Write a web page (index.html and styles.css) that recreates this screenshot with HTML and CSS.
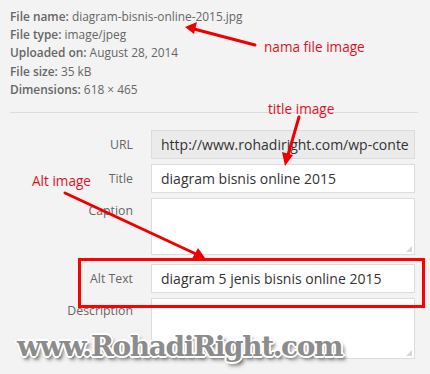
FILE: index.html
```html
<!DOCTYPE html>
<html>
<head>
<meta charset="utf-8">
<link rel="stylesheet" href="styles.css">
</head>
<body>
<div class="page">
  <div class="info">
    <div><b>File name:</b> diagram-bisnis-online-2015.jpg</div>
    <div><b>File type:</b> image/jpeg</div>
    <div><b>Uploaded on:</b> August 28, 2014</div>
    <div><b>File size:</b> 35 kB</div>
    <div><b>Dimensions:</b> 618 × 465</div>
  </div>
  <div class="sep"></div>
  <div class="form">
    <label class="lbl">URL</label>
    <div class="field ro">http://www.rohadiright.com/wp-conte</div>
    <label class="lbl">Title</label>
    <div class="field">diagram bisnis online 2015</div>
    <label class="lbl top">Caption</label>
    <div class="field area cap"><span class="grip"></span></div>
    <label class="lbl alt">Alt Text</label>
    <div class="field alt">diagram 5 jenis bisnis online 2015</div>
    <label class="lbl top">Description</label>
    <div class="field area desc"><span class="grip"></span></div>
  </div>

  <div class="note n1">nama file image</div>
  <div class="note n2">title image</div>
  <div class="note n3">Alt image</div>
  <div class="redbox"></div>
  <svg class="arrows" width="430" height="374" viewBox="0 0 430 374">
    <g stroke="#ee0000" stroke-width="3" stroke-linecap="round" fill="none">
      <line x1="255" y1="45" x2="194" y2="29"/>
      <line x1="299" y1="117" x2="288" y2="155"/>
      <line x1="65" y1="193" x2="196" y2="254"/>
    </g>
    <g fill="#ee0000">
      <polygon points="185,27 197,22 194,34"/>
      <polygon points="285,166 282,152 293,155"/>
      <polygon points="205,258 192,259 198,248"/>
    </g>
  </svg>
  <div class="wm">www.RohadiRight.com</div>
</div>
</body>
</html>
```
FILE: styles.css
```css
html, body { margin: 0; padding: 0; }
body { background: #f3f3f3; font-family: "Open Sans", "DejaVu Sans", sans-serif; }
.page { position: relative; width: 430px; height: 374px; overflow: hidden; }
.info { padding: 7px 0 0 10px; font-size: 11.9px; line-height: 18.2px; color: #666; }
.info b { font-weight: 600; }
.sep { margin: 14px 12px 0 10px; border-top: 1px solid #dcdcdc; }
.form {
  display: grid;
  grid-template-columns: 133px 264px;
  column-gap: 18px;
  margin-top: 17px;
}
.lbl { font-size: 12.3px; color: #666; text-align: right; line-height: 29px; }
.lbl.top { line-height: 18px; padding-top: 4px; }
.field {
  box-sizing: border-box;
  height: 29px;
  background: #fff;
  border: 1px solid #dcdcdc;
  font-size: 14px;
  color: #333;
  padding: 0 9px;
  line-height: 27px;
  white-space: nowrap;
  overflow: hidden;
  margin-bottom: 5px;
  position: relative;
}
.field.ro { background: #ebebeb; }
.field.area.cap { height: 57px; margin-bottom: 9px; }
.field.area.desc { height: 61px; }
.field.alt, .lbl.alt { margin-bottom: 5px; }
.grip {
  position: absolute; right: 2px; bottom: 2px; width: 6px; height: 6px;
  background-image: radial-gradient(circle, #aaa 0.6px, transparent 0.8px);
  background-size: 2px 2px;
  clip-path: polygon(100% 0, 100% 100%, 0 100%);
}
.note { position: absolute; color: #e0101e; font-size: 13.6px; font-family: "Open Sans", sans-serif; line-height: 16px; }
.n1 { left: 264px; top: 39px; }
.n2 { left: 268px; top: 101px; }
.n3 { left: 32px; top: 173px; }
.redbox { position: absolute; left: 78px; top: 258px; width: 341px; height: 44px; border: 3px solid #f00; }
.arrows { position: absolute; left: 0; top: 0; }
.wm {
  position: absolute; left: 17px; top: 330px;
  font-family: "DejaVu Serif", serif; font-weight: bold; font-size: 28px;
  letter-spacing: -1.4px;
  color: #8c8c8c;
  text-shadow: -1px -1px 0 #fff, 1px -1px 0 #fff, -1px 1px 0 #fff, 1px 1px 0 #fff,
    0 -2px 0 #fff, 0 2px 0 #fff, -2px 0 0 #fff, 2px 0 0 #fff,
    2px 3px 3px #777, 3px 4px 4px #999;
}
```
